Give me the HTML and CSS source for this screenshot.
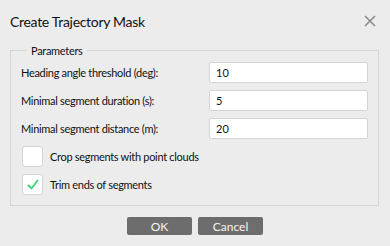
FILE: index.html
```html
<!DOCTYPE html>
<html lang="en">

<head>
    <meta charset="UTF-8">
    <title>Create Trajectory Mask</title>
    <link rel="stylesheet" href="styles.css">
</head>

<body>
    <div id="dialog">
        <div class="title-bar">
            <span class="title">Create Trajectory Mask</span>
            <svg class="close" width="12" height="12" viewBox="0 0 12 12">
                <path d="M1 1 L11 11 M11 1 L1 11" stroke="#8a8a8a" stroke-width="1.6" fill="none"/>
            </svg>
        </div>

        <fieldset class="group">
            <legend>Parameters</legend>
            <div class="form-row">
                <label for="heading">Heading angle threshold (deg):</label>
                <input type="text" id="heading" value="10">
            </div>
            <div class="form-row">
                <label for="duration">Minimal segment duration (s):</label>
                <input type="text" id="duration" value="5">
            </div>
            <div class="form-row">
                <label for="distance">Minimal segment distance (m):</label>
                <input type="text" id="distance" value="20">
            </div>
            <div class="check-row">
                <span class="check-box"></span>
                <span>Crop segments with point clouds</span>
            </div>
            <div class="check-row">
                <span class="check-box">
                    <svg width="12" height="11" viewBox="0 0 12 11">
                        <path d="M1 6 L4.5 9.5 L11 1" stroke="#3dd27a" stroke-width="1.8" fill="none"/>
                    </svg>
                </span>
                <span>Trim ends of segments</span>
            </div>
        </fieldset>

        <div class="buttons">
            <button type="button">OK</button>
            <button type="button">Cancel</button>
        </div>
    </div>
</body>

</html>
```

FILE: styles.css
```css
body {
    margin: 0;
    background-color: #ececec;
    font-family: Lato, sans-serif;
    font-size: 11px;
    letter-spacing: -0.3px;
    color: #111;
}

#dialog {
    width: 390px;
    height: 246px;
}

.title-bar {
    display: flex;
    justify-content: space-between;
    align-items: center;
    height: 42px;
    padding: 0 14px 2px 10px;
}

.title {
    font-size: 14px;
    color: #111;
}

.group {
    margin: 0 11px 0 10px;
    padding: 1px 10px 0 10px;
    border: 1px solid #d6d6d6;
    height: 162px;
    box-sizing: border-box;
}

.group legend {
    padding: 0 4px;
    margin-left: 6px;
    font-size: 11px;
    line-height: 13px;
}

.form-row {
    display: flex;
    align-items: center;
    justify-content: space-between;
    height: 28px;
}

.form-row input {
    width: 159px;
    height: 21px;
    box-sizing: border-box;
    border: 1px solid #d4d4d4;
    border-radius: 2px;
    padding: 0 6px;
    font-family: Lato, sans-serif;
    font-size: 11px;
    color: #111;
}

.check-row {
    display: flex;
    align-items: center;
    gap: 7px;
    height: 28px;
}

.check-box {
    display: flex;
    align-items: center;
    justify-content: center;
    width: 21px;
    height: 21px;
    box-sizing: border-box;
    background-color: #fff;
    border: 1px solid #d4d4d4;
    border-radius: 3px;
    margin-left: 1px;
}

.buttons {
    display: flex;
    justify-content: center;
    gap: 6px;
    padding-top: 11px;
}

.buttons button {
    width: 65px;
    height: 18px;
    border: none;
    border-radius: 2px;
    background-color: #6d6d6d;
    color: #f4f4f4;
    font-family: Lato, sans-serif;
    font-size: 12px;
    padding: 0;
}
```
